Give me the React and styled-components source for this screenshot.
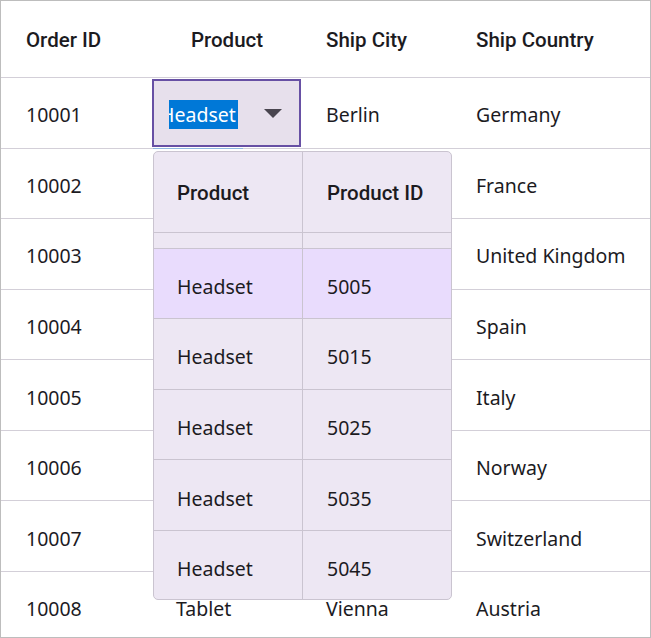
import React, { useLayoutEffect, useRef } from 'react'
import styled, { createGlobalStyle } from 'styled-components'

const GlobalStyle = createGlobalStyle`
  body {
    margin: 0;
    background: #fff;
    font-family: "Noto Sans", "Open Sans", sans-serif;
    color: #1c1b1f;
  }
`

const orders = [
  { id: 10001, product: 'Headset', city: 'Berlin', country: 'Germany' },
  { id: 10002, product: 'Keyboard', city: 'Paris', country: 'France' },
  { id: 10003, product: 'Mouse', city: 'London', country: 'United Kingdom' },
  { id: 10004, product: 'Monitor', city: 'Madrid', country: 'Spain' },
  { id: 10005, product: 'Webcam', city: 'Rome', country: 'Italy' },
  { id: 10006, product: 'Speaker', city: 'Oslo', country: 'Norway' },
  { id: 10007, product: 'Laptop', city: 'Bern', country: 'Switzerland' },
  { id: 10008, product: 'Tablet', city: 'Vienna', country: 'Austria' },
]

const products = [
  { name: 'Headset', code: 4995 },
  { name: 'Headset', code: 5005 },
  { name: 'Headset', code: 5015 },
  { name: 'Headset', code: 5025 },
  { name: 'Headset', code: 5035 },
  { name: 'Headset', code: 5045 },
  { name: 'Headset', code: 5055 },
]

const Frame = styled.div`
  position: relative;
  width: 651px;
  height: 638px;
  box-sizing: border-box;
  border: 1px solid #bdbdbd;
  overflow: hidden;
  background: #fff;
`

const Row = styled.div`
  display: grid;
  grid-template-columns: 150px 150px 150px 1fr;
  align-items: center;
  box-sizing: border-box;
  height: ${p => p.$height}px;
  border-bottom: 1px solid #d3cfd8;
`

const HeadCell = styled.div`
  font-family: Roboto, "Noto Sans", sans-serif;
  font-weight: 500;
  font-size: 20.5px;
  padding-left: 25px;
  padding-top: 1px;
  text-align: ${p => (p.$center ? 'center' : 'left')};
  ${p => p.$center && 'padding-left: 2px;'}
  white-space: nowrap;
`

const Cell = styled.div`
  font-size: 19.5px;
  padding-left: 25px;
  padding-top: 4px;
  white-space: nowrap;
`

const EditCell = styled.div`
  align-self: stretch;
  display: flex;
  padding: 1px 0 1px 1px;
  box-sizing: border-box;
`

const Editor = styled.div`
  position: relative;
  flex: 1;
  display: flex;
  align-items: center;
  box-sizing: border-box;
  border: 2px solid #6750a4;
  background: #e7e0ec;
  padding: 0 17px 0 15px;

  &::after {
    content: '';
    position: absolute;
    left: -1px;
    bottom: -4px;
    width: 90px;
    height: 1px;
    background: #8fb8df;
  }
`

const EditorText = styled.div`
  flex: 1;
  overflow: hidden;
  padding-top: 3px;
`

const Selected = styled.span`
  display: inline-block;
  margin-left: -9px;
  padding-right: 2px;
  height: 29px;
  line-height: 29px;
  font-size: 19.5px;
  color: #fff;
  background: #0078d7;
`

const Caret = styled.svg`
  width: 18px;
  height: 9px;
  flex: none;
  margin-top: 2px;
`

const Popup = styled.div`
  position: absolute;
  left: 152px;
  top: 150px;
  width: 299px;
  height: 449px;
  box-sizing: border-box;
  border: 1px solid #cac4d0;
  border-radius: 5px;
  background: #ede7f3;
  overflow: hidden;
  display: flex;
  flex-direction: column;
`

const PopupRow = styled.div`
  display: grid;
  grid-template-columns: 149px 1fr;
  flex: none;
  box-sizing: border-box;
  height: ${p => p.$height}px;
  border-bottom: ${p => (p.$last ? 'none' : '1px solid #cac4d0')};
  background: ${p => (p.$active ? '#e9dcfd' : 'transparent')};
`

const PopupHead = styled.div`
  display: flex;
  align-items: center;
  padding: 2px 0 0 ${p => (p.$divider ? 23 : 24)}px;
  font-family: Roboto, "Noto Sans", sans-serif;
  font-weight: 500;
  font-size: 20.5px;
  border-right: ${p => (p.$divider ? '1px solid #cac4d0' : 'none')};
`

const PopupCell = styled.div`
  display: flex;
  align-items: center;
  padding: 6px 0 0 ${p => (p.$divider ? 23 : 24)}px;
  font-size: 19.5px;
  border-right: ${p => (p.$divider ? '1px solid #cac4d0' : 'none')};
`

const List = styled.div`
  flex: 1;
  overflow: hidden;
`

function ProductPopup() {
  const listRef = useRef(null)

  // the list opens scrolled so the selected item sits near the top
  useLayoutEffect(() => {
    if (listRef.current) listRef.current.scrollTop = 55
  }, [])

  return (
    <Popup>
      <PopupRow $height={81}>
        <PopupHead $divider>Product</PopupHead>
        <PopupHead>Product ID</PopupHead>
      </PopupRow>
      <List ref={listRef}>
        {products.map((p, i) => (
          <PopupRow key={p.code} $height={70.6} $active={p.code === 5005} $last={i === products.length - 1}>
            <PopupCell $divider>{p.name}</PopupCell>
            <PopupCell>{p.code}</PopupCell>
          </PopupRow>
        ))}
      </List>
    </Popup>
  )
}

export default function App() {
  return (
    <>
      <GlobalStyle />
      <Frame>
        <Row $height={77}>
          <HeadCell>Order ID</HeadCell>
          <HeadCell $center>Product</HeadCell>
          <HeadCell>Ship City</HeadCell>
          <HeadCell>Ship Country</HeadCell>
        </Row>
        {orders.map((o, i) => (
          <Row key={o.id} $height={70.57}>
            <Cell>{o.id}</Cell>
            {i === 0 ? (
              <EditCell>
                <Editor>
                  <EditorText>
                    <Selected>{o.product}</Selected>
                  </EditorText>
                  <Caret viewBox="0 0 18 9">
                    <path d="M0 0h18L9 9z" fill="#49454f" />
                  </Caret>
                </Editor>
              </EditCell>
            ) : (
              <Cell>{o.product}</Cell>
            )}
            <Cell>{o.city}</Cell>
            <Cell>{o.country}</Cell>
          </Row>
        ))}
        <ProductPopup />
      </Frame>
    </>
  )
}
